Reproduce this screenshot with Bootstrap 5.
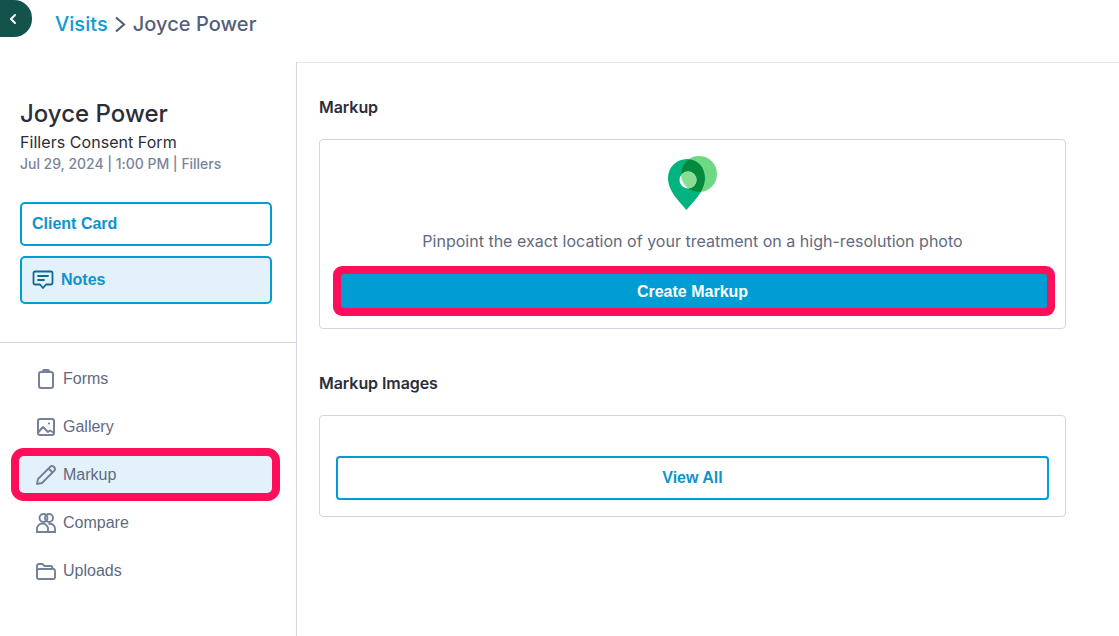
<!DOCTYPE html>
<html lang="en">
<head>
<meta charset="utf-8">
<title>Markup</title>
<link href="https://cdn.jsdelivr.net/npm/bootstrap@5.3.0/dist/css/bootstrap.min.css" rel="stylesheet">
<style>
html,body{height:636px;overflow:hidden;background:#fff}
body{font-family:Inter,"Liberation Sans",sans-serif;color:#2b2d3a}
.topbar{height:62px}
.backtab{width:32px;height:37px;background:#14524c;border-radius:0 18px 18px 0;padding-right:6px}
.crumb{font-size:20px;font-weight:500;line-height:24px;color:#545f78;padding-left:23px;padding-top:12px;letter-spacing:.05px}
.crumb a{color:#0f9ad3;text-decoration:none}
.crumb svg{margin:0 7px 0 6px;vertical-align:-2px}
.shell{height:574px}
.sidebar{width:297px;flex:none;border-right:1px solid #d5d8e0}
.side-head{height:281px;padding:38px 24px 0 20px;border-bottom:1px solid #d5d8e0}
.pname{font-size:24px;font-weight:500;line-height:27px;color:#2b2d3a;margin:0}
.pform{font-size:16px;line-height:22px;margin-top:4px;color:#2b2d3a;letter-spacing:.05px}
.pmeta{font-size:14px;line-height:20px;color:#7a849c;margin-top:1px;letter-spacing:-.03px;font-weight:500}
.side-btn{display:flex;align-items:center;width:252px;border:2px solid #009cd4;border-radius:5px;color:#0f93cc;font-family:"Liberation Sans",sans-serif;font-size:16px;font-weight:700;padding:0 10px;text-decoration:none;background:#fff}
.cc{height:44px;margin-top:28px}
.nt{height:48px;margin-top:10px;background:#e3f2fa;gap:7px}
.navlist{padding:17px 24px 0 19px;width:272px}
.nav-row{display:flex;align-items:center;height:37px;margin-bottom:11px;padding-left:17px;gap:7px;color:#5f6a82;font-family:"Liberation Sans",sans-serif;font-size:16px;text-decoration:none;border-radius:5px;width:253px}
.nav-row svg{flex:none}
.nav-row.current{background:#e3f2fa;box-shadow:0 0 0 8px #ff0f5a;margin-top:1px}
.content{flex:1;padding:32px 0 0 22px;border-top:1px solid #e6e8ee}
.sec-title{font-size:16px;font-weight:600;line-height:24px;color:#2b2d3a;margin:0 0 20px;letter-spacing:-.07px}
.panel{width:747px;border:1px solid #d5d5e0;border-radius:4px;background:#fff}
.panel-a{height:190px;padding:16px 21px 0 21px;margin-bottom:42px}
.panel-b{height:102px;padding:40px 16px 0 16px}
.hint{font-size:16px;line-height:24px;color:#5f6a82;margin:19px 0 21px;text-align:center;letter-spacing:.01px}
.primary-cta{display:flex;align-items:center;justify-content:center;height:34px;width:706px;padding:2px 3px 0 0;background:#009cd4;color:#fff;font-family:"Liberation Sans",sans-serif;font-weight:700;font-size:16px;border-radius:3px;box-shadow:0 0 0 8px #ff0f5a;text-decoration:none}
.outline-cta{display:flex;align-items:center;justify-content:center;height:44px;width:713px;border:2px solid #009cd4;color:#0f93cc;font-family:"Liberation Sans",sans-serif;font-weight:700;font-size:16px;border-radius:4px;text-decoration:none}
.pin-wrap svg{display:block}
</style>
</head>
<body>
<div class="topbar d-flex align-items-start">
  <div class="backtab d-flex align-items-center justify-content-center">
    <svg width="8" height="12" viewBox="0 0 8 12" fill="none" stroke="#fff" stroke-width="2" stroke-linecap="round" stroke-linejoin="round"><path d="M6 2 2 6l4 4"/></svg>
  </div>
  <div class="crumb"><a href="#">Visits</a><svg width="12" height="17" viewBox="0 0 12 17" fill="none" stroke="#545f78" stroke-width="2.2"><path d="M2 1.500l8 7-8 7"/></svg>Joyce Power</div>
</div>
<div class="shell d-flex">
  <aside class="sidebar">
    <div class="side-head">
      <h1 class="pname">Joyce Power</h1>
      <div class="pform">Fillers Consent Form</div>
      <div class="pmeta">Jul 29, 2024 | 1:00 PM | Fillers</div>
      <a class="side-btn cc" href="#">Client Card</a>
      <a class="side-btn nt" href="#">
        <svg width="22" height="20" viewBox="0 0 22 20" fill="none" stroke="#0b6a96" stroke-width="1.800" stroke-linejoin="round" stroke-linecap="round"><path d="M3 1.500h16a1.500 1.500 0 0 1 1.500 1.500v10a1.500 1.500 0 0 1-1.500 1.500h-5l-3 3.500-3-3.500H3A1.500 1.500 0 0 1 1.500 13V3A1.500 1.500 0 0 1 3 1.500z"/><path d="M6 6h10M6 10h6"/></svg>
        Notes</a>
    </div>
    <nav class="navlist">
      <a class="nav-row" href="#"><svg width="20" height="20" viewBox="0 0 20 20" fill="none" stroke="#75809a" stroke-width="2" stroke-linejoin="round"><rect x="3" y="3" width="14" height="16" rx="2"/><path d="M7 3.500V2a1 1 0 0 1 1-1h4a1 1 0 0 1 1 1v1.500"/></svg>Forms</a>
      <a class="nav-row" href="#"><svg width="20" height="20" viewBox="0 0 20 20" fill="none" stroke="#75809a" stroke-width="2" stroke-linejoin="round"><rect x="2" y="2" width="16" height="16" rx="2"/><path d="M2.500 15l4.500-5 5 5 2-1.500 3.500 2"/><circle cx="13" cy="6.500" r="1.100" fill="#75809a" stroke="none"/></svg>Gallery</a>
      <a class="nav-row current" href="#"><svg width="20" height="20" viewBox="0 0 20 20" fill="none" stroke="#75809a" stroke-width="1.900" stroke-linejoin="round"><path d="M1 19l1-5L14 2a2.700 2.700 0 0 1 4 4L6 18z"/><path d="M12.500 3.500l4 4"/></svg>Markup</a>
      <a class="nav-row" href="#"><svg width="20" height="20" viewBox="0 0 20 20" fill="none" stroke="#75809a" stroke-width="1.900"><circle cx="7.500" cy="5" r="4"/><circle cx="13" cy="5" r="4"/><path d="M1 19v-3a5.500 5.500 0 0 1 11 0v3z"/><path d="M12.500 11a5 5 0 0 1 6.500 5v3h-7"/></svg>Compare</a>
      <a class="nav-row" href="#"><svg width="20" height="20" viewBox="0 0 20 20" fill="none" stroke="#75809a" stroke-width="1.900" stroke-linejoin="round"><path d="M1 15.500V5a2 2 0 0 1 2-2h3.500l2 2h6a2 2 0 0 1 2 2v1"/><path d="M1 16.500A1.500 1.500 0 0 0 2.500 18h15a1.500 1.500 0 0 0 1.500-1.500V10a2 2 0 0 0-2-2H3a2 2 0 0 0-2 2z"/></svg>Uploads</a>
    </nav>
  </aside>
  <main class="content">
    <h2 class="sec-title">Markup</h2>
    <section class="panel panel-a">
      <div class="pin-wrap d-flex justify-content-center">
        <svg width="50" height="54" viewBox="0 0 50 54">
          <defs>
            <clipPath id="pinclip"><path d="M19 3C8.500 3 0 11.500 0 22c0 14 13 25 18.500 32C24 47 37 36 37 22 37 11.500 29.500 3 19 3z"/></clipPath>
            <clipPath id="holeclip"><circle cx="20" cy="24" r="8.500"/></clipPath>
          </defs>
          <path d="M19 3C8.500 3 0 11.500 0 22c0 14 13 25 18.500 32C24 47 37 36 37 22 37 11.500 29.500 3 19 3z" fill="#00b37f"/>
          <circle cx="31" cy="18" r="18" fill="#6fd884"/>
          <circle cx="31" cy="18" r="18" fill="#058a3d" clip-path="url(#pinclip)"/>
          <circle cx="20" cy="24" r="8.500" fill="#fff"/>
          <circle cx="31" cy="18" r="18" fill="#86de92" clip-path="url(#holeclip)"/>
        </svg>
      </div>
      <p class="hint">Pinpoint the exact location of your treatment on a high-resolution photo</p>
      <a class="primary-cta" href="#">Create Markup</a>
    </section>
    <h2 class="sec-title">Markup Images</h2>
    <section class="panel panel-b">
      <a class="outline-cta" href="#">View All</a>
    </section>
  </main>
</div>
<script src="https://cdn.jsdelivr.net/npm/bootstrap@5.3.0/dist/js/bootstrap.bundle.min.js"></script>
</body>
</html>
